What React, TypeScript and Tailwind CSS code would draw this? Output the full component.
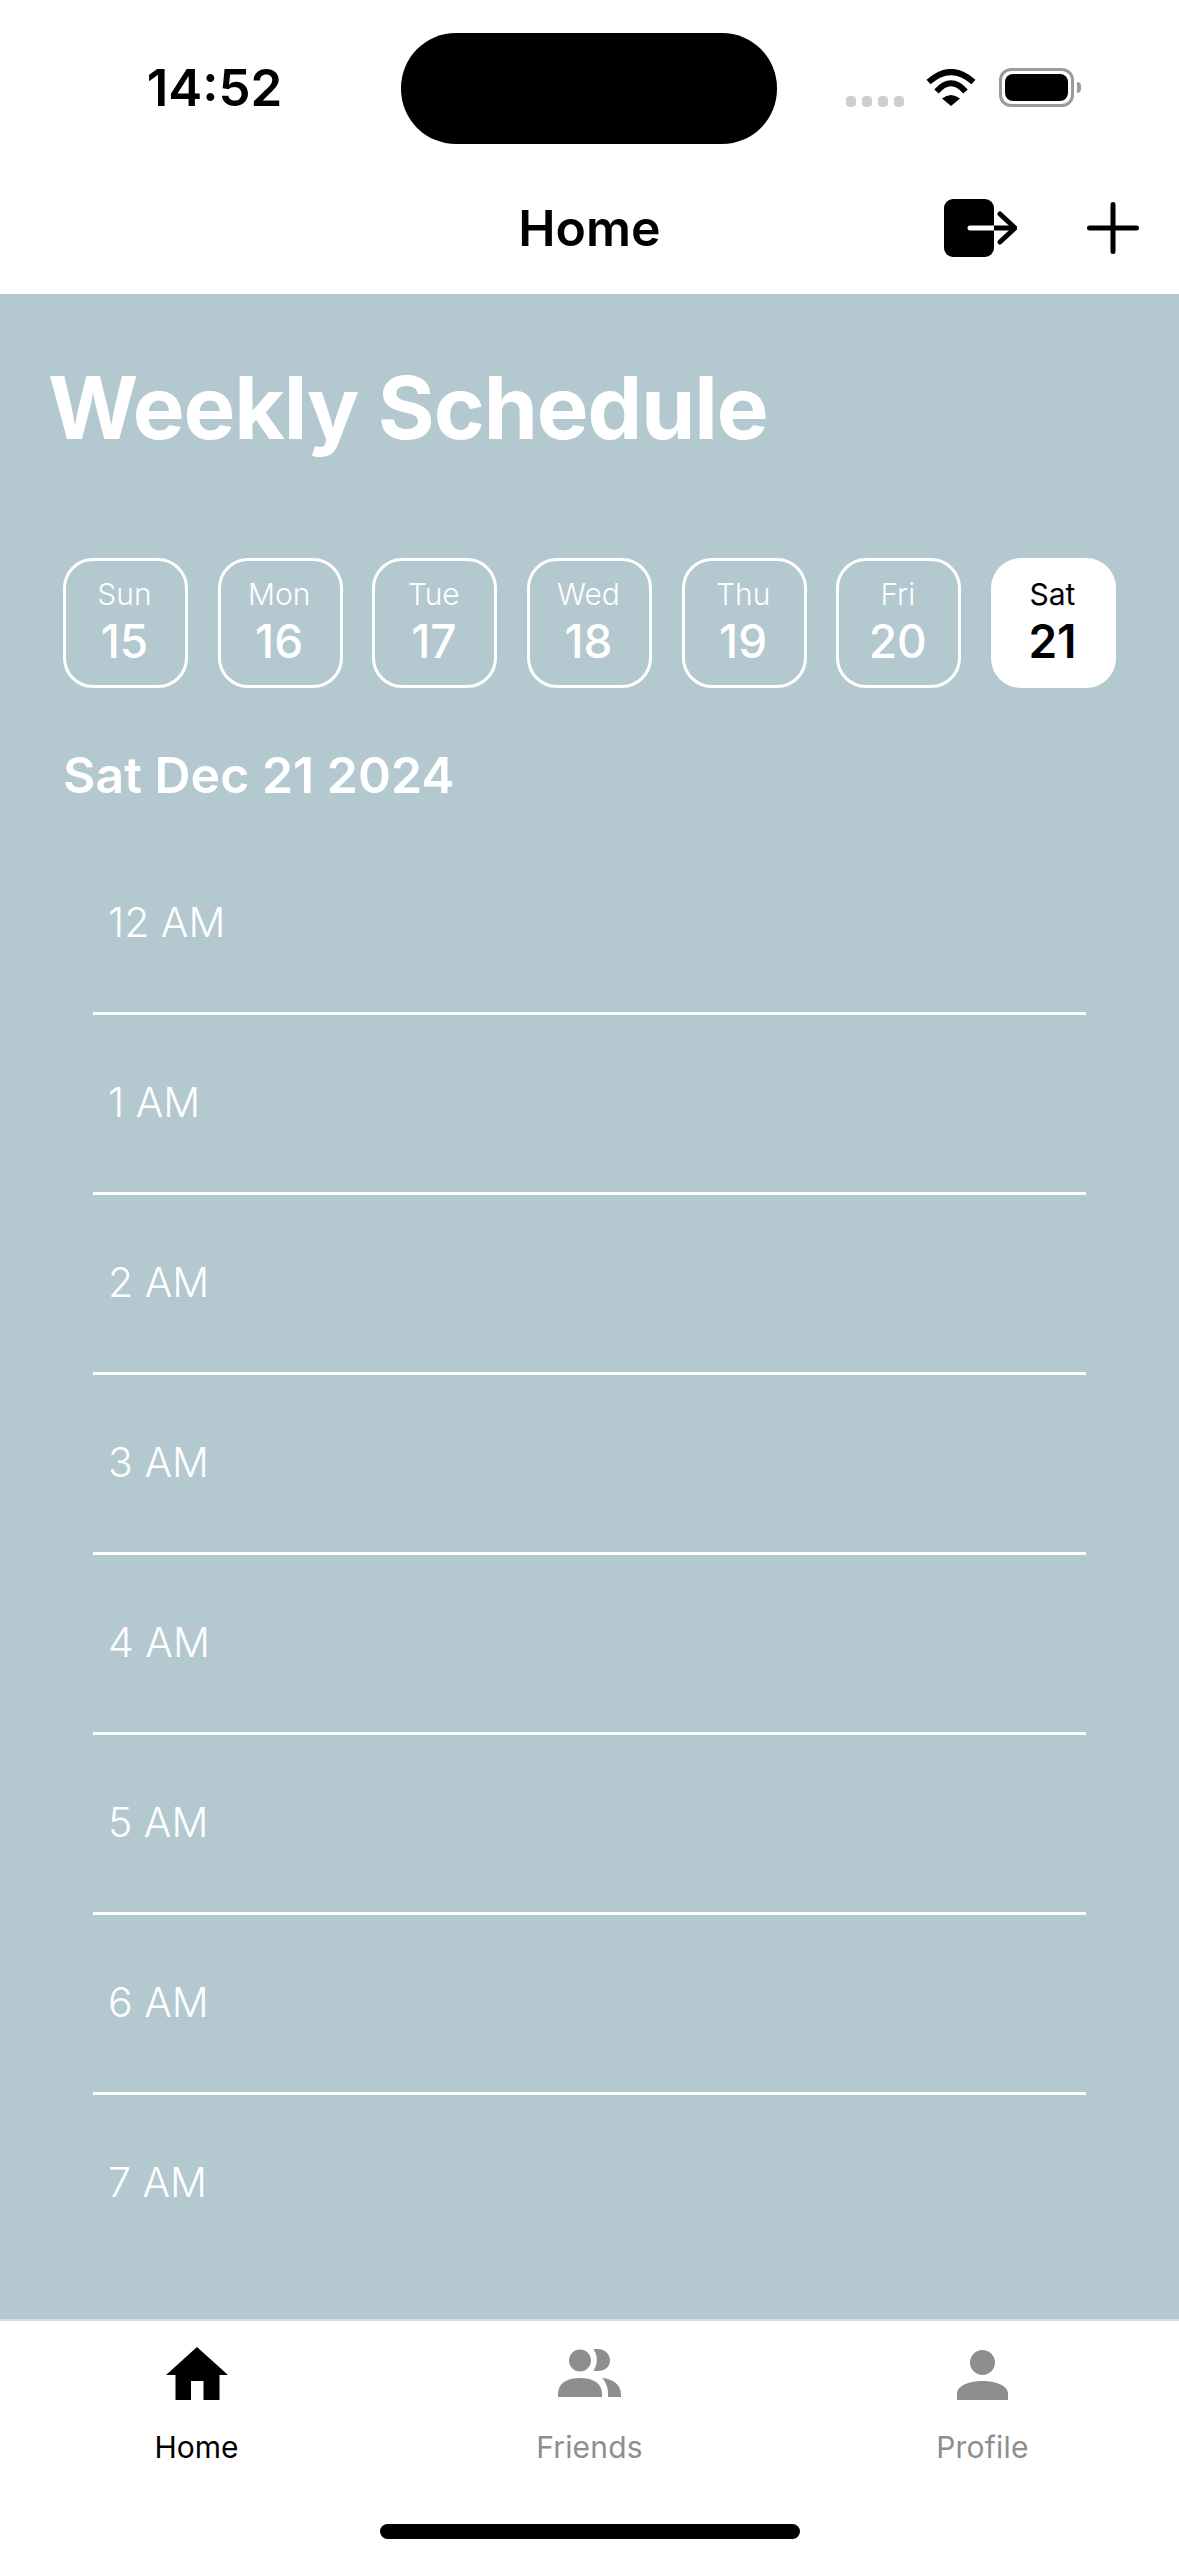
import React from "react";

const days = [
  { d: "Sun", n: 15 },
  { d: "Mon", n: 16 },
  { d: "Tue", n: 17 },
  { d: "Wed", n: 18 },
  { d: "Thu", n: 19 },
  { d: "Fri", n: 20 },
  { d: "Sat", n: 21, active: true },
];
const hours = ["12 AM", "1 AM", "2 AM", "3 AM", "4 AM", "5 AM", "6 AM", "7 AM"];

function Wifi() {
  return (
    <svg width="50" height="37" viewBox="0 0 50 37">
      <path d="M2.5 13 Q25 -7 47.5 13" fill="none" stroke="#000" strokeWidth="6" />
      <path d="M10.5 22.5 Q25 6 39.5 22.5" fill="none" stroke="#000" strokeWidth="6" />
      <path d="M16 29.5 Q25 22.5 34 29.5 L25 37 Z" fill="#000" />
    </svg>
  );
}

function Battery() {
  return (
    <div className="flex items-center">
      <div className="w-[75px] h-[39px] rounded-[12px] border-[3px] border-[#9b9b9b] p-[3px] box-border">
        <div className="w-full h-full rounded-[8px] bg-black" />
      </div>
      <div className="ml-[3px] w-[4px] h-[11px] rounded-r-[4px] bg-[#9b9b9b]" />
    </div>
  );
}

function LogoutIcon() {
  return (
    <svg width="73" height="58" viewBox="0 0 73 58">
      <rect x="0" y="0" width="50" height="58" rx="9" fill="#000" />
      <path d="M26 29 H50" stroke="#fff" strokeWidth="5" strokeLinecap="round" />
      <path d="M50 29 H71" stroke="#000" strokeWidth="5" />
      <path d="M56 15 L71 29 L56 43" fill="none" stroke="#000" strokeWidth="5" strokeLinecap="round" strokeLinejoin="round" />
    </svg>
  );
}

function PlusIcon() {
  return (
    <svg width="52" height="52" viewBox="0 0 52 52">
      <path d="M26 2.5 V49.5 M2.5 26 H49.5" stroke="#000" strokeWidth="5" strokeLinecap="round" />
    </svg>
  );
}

function HomeIcon() {
  return (
    <svg width="62" height="53" viewBox="0 0 62 53">
      <polygon points="31,0 62,28 53.5,28 53.5,53 37.5,53 37.5,34 25,34 25,53 9.5,53 9.5,28 0,28" fill="#000" />
    </svg>
  );
}

function FriendsIcon() {
  return (
    <svg width="63" height="53" viewBox="0 0 63 53">
      <g transform="translate(0 2)" fill="#8e8e8f">
        <ellipse cx="22" cy="11.5" rx="11" ry="11" />
        <path d="M0 48 V45 C0 35 8 29 22 29 C36 29 44 35 44 45 V48 Z" />
        <path d="M35.5 0.6 C37 0 38 0 40 0 C46.5 0 52 5 52 11.5 C52 18 46.5 22 40 22 C38 22 37 22 35.5 21.4 C40 16 40 6 35.5 0.6 Z" />
        <path d="M44 29 C56 30 63 36 63 46 V48 H50 V45 C50 39 48 33 44 29 Z" />
      </g>
    </svg>
  );
}

function ProfileIcon() {
  return (
    <svg width="51" height="53" viewBox="0 0 51 53">
      <g transform="translate(0 3)" fill="#8e8e8f">
        <circle cx="25.5" cy="12.5" r="12.5" />
        <path d="M0 50 V44 C0 36 11 31 25.5 31 C40 31 51 36 51 44 V50 Z" />
      </g>
    </svg>
  );
}

export default function App() {
  return (
    <div className="w-[1179px] h-[2556px] bg-white flex flex-col overflow-hidden font-['Inter',sans-serif]">
      {/* status bar */}
      <div className="h-[165px] grid grid-cols-[401px_376px_402px] pt-[33px] box-border shrink-0">
        <div className="h-[111px] flex justify-center pl-[28px] pt-[25px]">
          <span className="text-[51px] leading-[60px] font-semibold text-black">14:52</span>
        </div>
        <div className="h-[111px] rounded-[55px] bg-black" />
        <div className="flex items-start pt-[35px] pl-[69px]">
          <div className="flex gap-[6px] mt-[28px]">
            <span className="w-[10px] h-[11px] rounded-[4px] bg-[#cfcfcf]" />
            <span className="w-[10px] h-[11px] rounded-[4px] bg-[#cfcfcf]" />
            <span className="w-[10px] h-[11px] rounded-[4px] bg-[#cfcfcf]" />
            <span className="w-[10px] h-[11px] rounded-[4px] bg-[#cfcfcf]" />
          </div>
          <div className="ml-[22px] mt-px"><Wifi /></div>
          <div className="ml-[23px]"><Battery /></div>
        </div>
      </div>

      {/* nav header */}
      <div className="h-[129px] grid grid-cols-[1fr_auto_1fr] items-center shrink-0 box-border pb-[3px]">
        <div />
        <div className="text-[50px] leading-[60px] font-semibold text-black">Home</div>
        <div className="flex justify-end items-center gap-[70px] pr-[40px]">
          <LogoutIcon />
          <PlusIcon />
        </div>
      </div>

      {/* main */}
      <div className="flex-1 min-h-0 bg-[#b4c8cf] overflow-hidden">
        <h1 className="pl-[48px] pt-[64px] text-[87px] leading-[100px] font-bold tracking-[-1.1px] text-white">Weekly Schedule</h1>

        <div className="mt-[100px] mx-[63px] flex justify-between">
          {days.map((x) => (
            <div
              key={x.d}
              className={
                x.active
                  ? "w-[125px] h-[130px] box-border rounded-[30px] border-[3px] border-white bg-white text-black flex flex-col items-center pt-[15px] pr-[2px]"
                  : "w-[125px] h-[130px] box-border rounded-[30px] border-[3px] border-white text-white flex flex-col items-center pt-[15px] pr-[2px]"
              }
            >
              <span className={x.active ? "text-[30px] leading-[36px] font-normal" : "text-[30px] leading-[36px] font-light"}>{x.d}</span>
              <span className={x.active ? "mt-[3px] text-[46px] leading-[53px] font-semibold" : "mt-[3px] text-[46px] leading-[53px] font-medium"}>{x.n}</span>
            </div>
          ))}
        </div>

        <div className="mt-[57px] pl-[63px] text-[50px] leading-[60px] font-semibold text-white">Sat Dec 21 2024</div>

        <div className="mt-[30px] ml-[93px] w-[993px]">
          {hours.map((h, i) => (
            <div
              key={h}
              className={
                i < hours.length - 1
                  ? "h-[180px] box-border border-b-[3px] border-white pl-[15px] pt-[62px]"
                  : "h-[180px] box-border pl-[15px] pt-[62px]"
              }
            >
              <span className="block text-[41px] leading-[50px] font-light text-white">{h}</span>
            </div>
          ))}
        </div>
      </div>

      {/* tab bar */}
      <div className="h-[237px] shrink-0 box-border bg-white border-t-2 border-[#d4dde1] flex flex-col">
        <div className="grid grid-cols-3 pt-[26px]">
          <div className="flex flex-col items-center">
            <HomeIcon />
            <span className="mt-[29px] text-[30px] leading-[36px] text-black">Home</span>
          </div>
          <div className="flex flex-col items-center">
            <FriendsIcon />
            <span className="mt-[29px] text-[30px] leading-[36px] tracking-[0.2px] text-[#8e8e8f]">Friends</span>
          </div>
          <div className="flex flex-col items-center">
            <ProfileIcon />
            <span className="mt-[29px] text-[30px] leading-[36px] tracking-[0.2px] text-[#8e8e8f]">Profile</span>
          </div>
        </div>
        <div className="mt-[59px] mx-auto w-[420px] h-[15px] rounded-full bg-black" />
      </div>
    </div>
  );
}
